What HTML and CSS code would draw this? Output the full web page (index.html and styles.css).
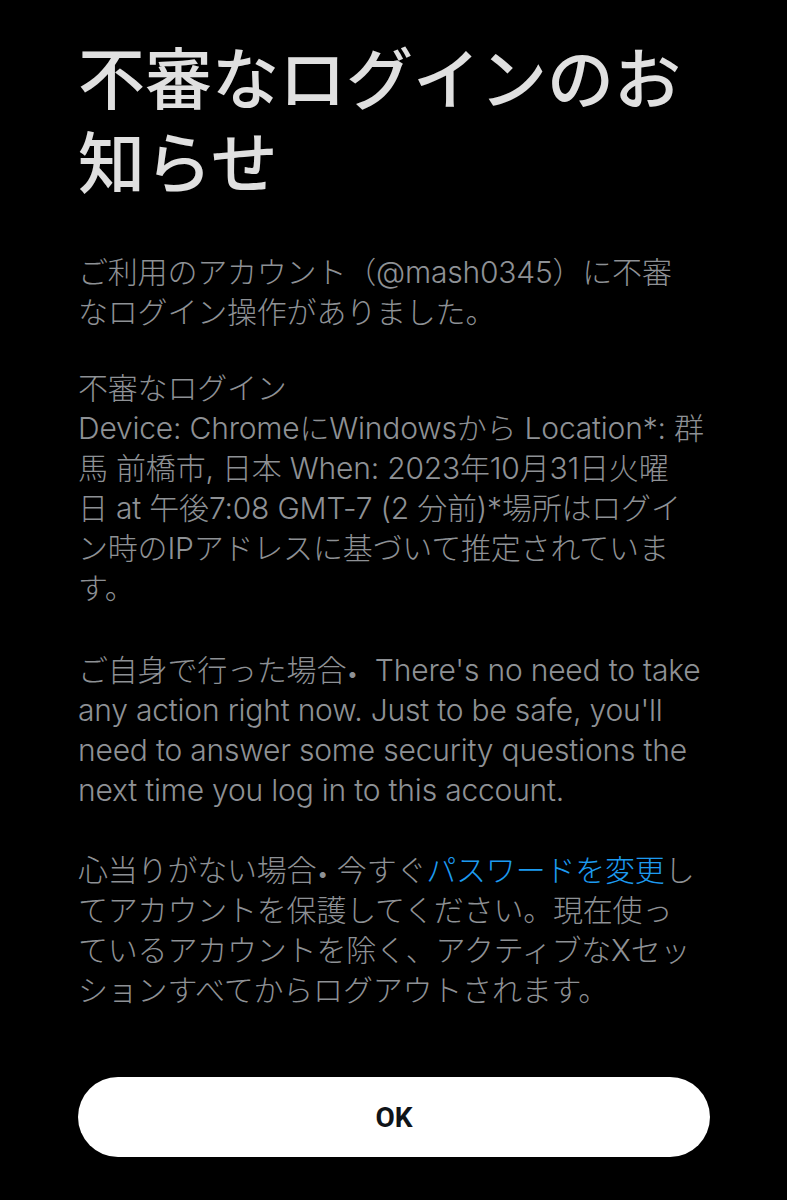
FILE: index.html
```html
<!DOCTYPE html>
<html lang="ja">
<head>
<meta charset="utf-8">
<title>不審なログインのお知らせ</title>
<link rel="stylesheet" href="styles.css">
</head>
<body>
<main class="sheet">
  <h1 class="title">不審なログインのお<br>知らせ</h1>
  <div class="body">
    <p class="para p1">ご利用のアカウント（@mash0345）に不審<br>なログイン操作がありました。</p>
    <p class="para p2">不審なログイン<br>Device: ChromeにWindowsから Location*: 群<br>馬 前橋市, 日本 When: 2023年10月31日火曜<br>日 at 午後7:08 GMT-7 (2 分前)*場所はログイ<br>ン時のIPアドレスに基づいて推定されていま<br>す。</p>
    <p class="para p3">ご自身で行った場合<span class="dot">•</span>&nbsp; There's no need to take<br>any action right now. Just to be safe, you'll<br>need to answer some security questions the<br>next time you log in to this account.</p>
    <p class="para p4">心当りがない場合<span class="dot">•</span> 今すぐ<a class="link" href="#">パスワードを変更</a>し<br>てアカウントを保護してください。現在使っ<br>ているアカウントを除く、アクティブなXセッ<br>ションすべてからログアウトされます。</p>
  </div>
  <button class="ok" type="button">OK</button>
</main>
</body>
</html>
```
FILE: styles.css
```css
html, body {
  margin: 0;
  padding: 0;
  background: #000;
}
body {
  font-family: Inter, "Noto Sans CJK JP", sans-serif;
}
.sheet {
  display: flex;
  flex-direction: column;
  padding: 33px 60px 0 78px;
  min-height: 1200px;
  box-sizing: border-box;
}
.title {
  margin: 0;
  font-family: "Noto Sans CJK JP", sans-serif;
  font-size: 67px;
  line-height: 84px;
  font-weight: 500;
  color: #e0e0e0;
  white-space: nowrap;
}
.body {
  margin-top: 51px;
  display: flex;
  flex-direction: column;
}
.para {
  margin: 0;
  font-size: 30px;
  line-height: 40px;
  font-weight: 300;
  color: #8e9195;
  white-space: nowrap;
  letter-spacing: -0.2px;
}
.dot {
  font-size: 22px;
  line-height: 0;
}
.p2 { margin-top: 36px; }
.p3 { margin-top: 42px; }
.p4 { margin-top: 40px; }
.link {
  color: #1d9bf0;
  text-decoration: none;
}
.ok {
  margin-top: 67px;
  margin-right: 17px;
  height: 80px;
  border: none;
  border-radius: 40px;
  background: #fff;
  color: #0f1419;
  font-family: Roboto, "Noto Sans CJK JP", sans-serif;
  font-size: 28px;
  font-weight: 700;
  cursor: pointer;
}
```
